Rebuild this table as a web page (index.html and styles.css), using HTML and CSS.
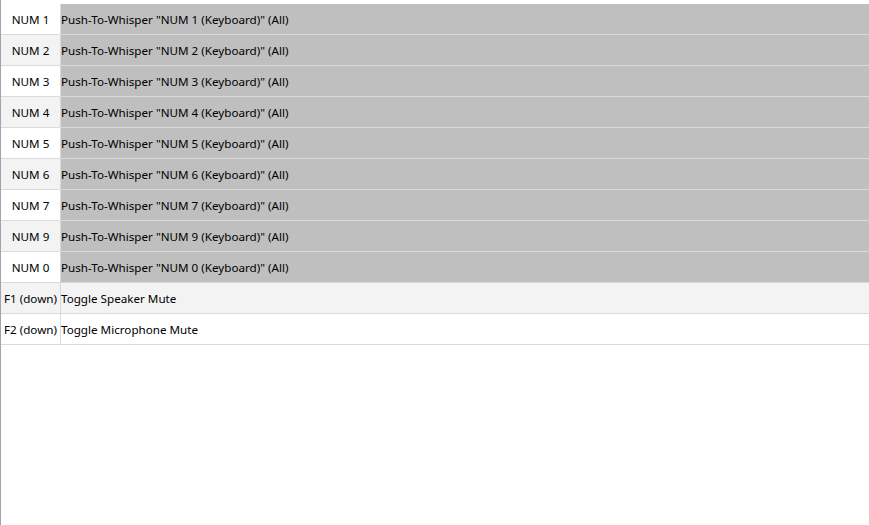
FILE: index.html
```html
<!DOCTYPE html>
<html lang="en">
<head>
    <meta charset="UTF-8">
    <meta name="viewport" content="width=device-width, initial-scale=1.0">
    <title>Hotkeys</title>
    <link rel="stylesheet" href="styles.css">
</head>
<body>
    <div class="list">
        <div class="row active"><div class="key">NUM 1</div><div class="action">Push-To-Whisper "NUM 1 (Keyboard)" (All)</div></div>
        <div class="row alt active"><div class="key">NUM 2</div><div class="action">Push-To-Whisper "NUM 2 (Keyboard)" (All)</div></div>
        <div class="row active"><div class="key">NUM 3</div><div class="action">Push-To-Whisper "NUM 3 (Keyboard)" (All)</div></div>
        <div class="row alt active"><div class="key">NUM 4</div><div class="action">Push-To-Whisper "NUM 4 (Keyboard)" (All)</div></div>
        <div class="row active"><div class="key">NUM 5</div><div class="action">Push-To-Whisper "NUM 5 (Keyboard)" (All)</div></div>
        <div class="row alt active"><div class="key">NUM 6</div><div class="action">Push-To-Whisper "NUM 6 (Keyboard)" (All)</div></div>
        <div class="row active"><div class="key">NUM 7</div><div class="action">Push-To-Whisper "NUM 7 (Keyboard)" (All)</div></div>
        <div class="row alt active"><div class="key">NUM 9</div><div class="action">Push-To-Whisper "NUM 9 (Keyboard)" (All)</div></div>
        <div class="row active"><div class="key">NUM 0</div><div class="action">Push-To-Whisper "NUM 0 (Keyboard)" (All)</div></div>
        <div class="row alt"><div class="key">F1 (down)</div><div class="action">Toggle Speaker Mute</div></div>
        <div class="row"><div class="key">F2 (down)</div><div class="action">Toggle Microphone Mute</div></div>
    </div>
</body>
</html>
```

FILE: styles.css
```css
html, body {
    height: 100%;
}

body {
    margin: 0;
    padding-top: 4px;
    box-sizing: border-box;
    background: #ffffff;
    border-left: 1px solid #a3a3b0;
    font-family: "Noto Sans", "Open Sans", sans-serif;
    font-size: 11.65px;
    color: #000000;
    overflow: hidden;
}

.list {
    display: flex;
    flex-direction: column;
}

.row {
    display: flex;
    height: 30px;
    border-bottom: 1px solid #dadada;
    background: #ffffff;
}

.row.alt {
    background: #f3f3f3;
}

.key {
    width: 59px;
    flex-shrink: 0;
    border-right: 1px solid #dadada;
    display: flex;
    align-items: center;
    justify-content: center;
    white-space: nowrap;
}

.row.active .key {
    background: #ffffff;
}

.row.alt.active .key {
    background: #f3f3f3;
}

.action {
    flex: 1;
    display: flex;
    align-items: center;
    white-space: nowrap;
}

.row.active .action {
    background: #bfbfbf;
}
```
